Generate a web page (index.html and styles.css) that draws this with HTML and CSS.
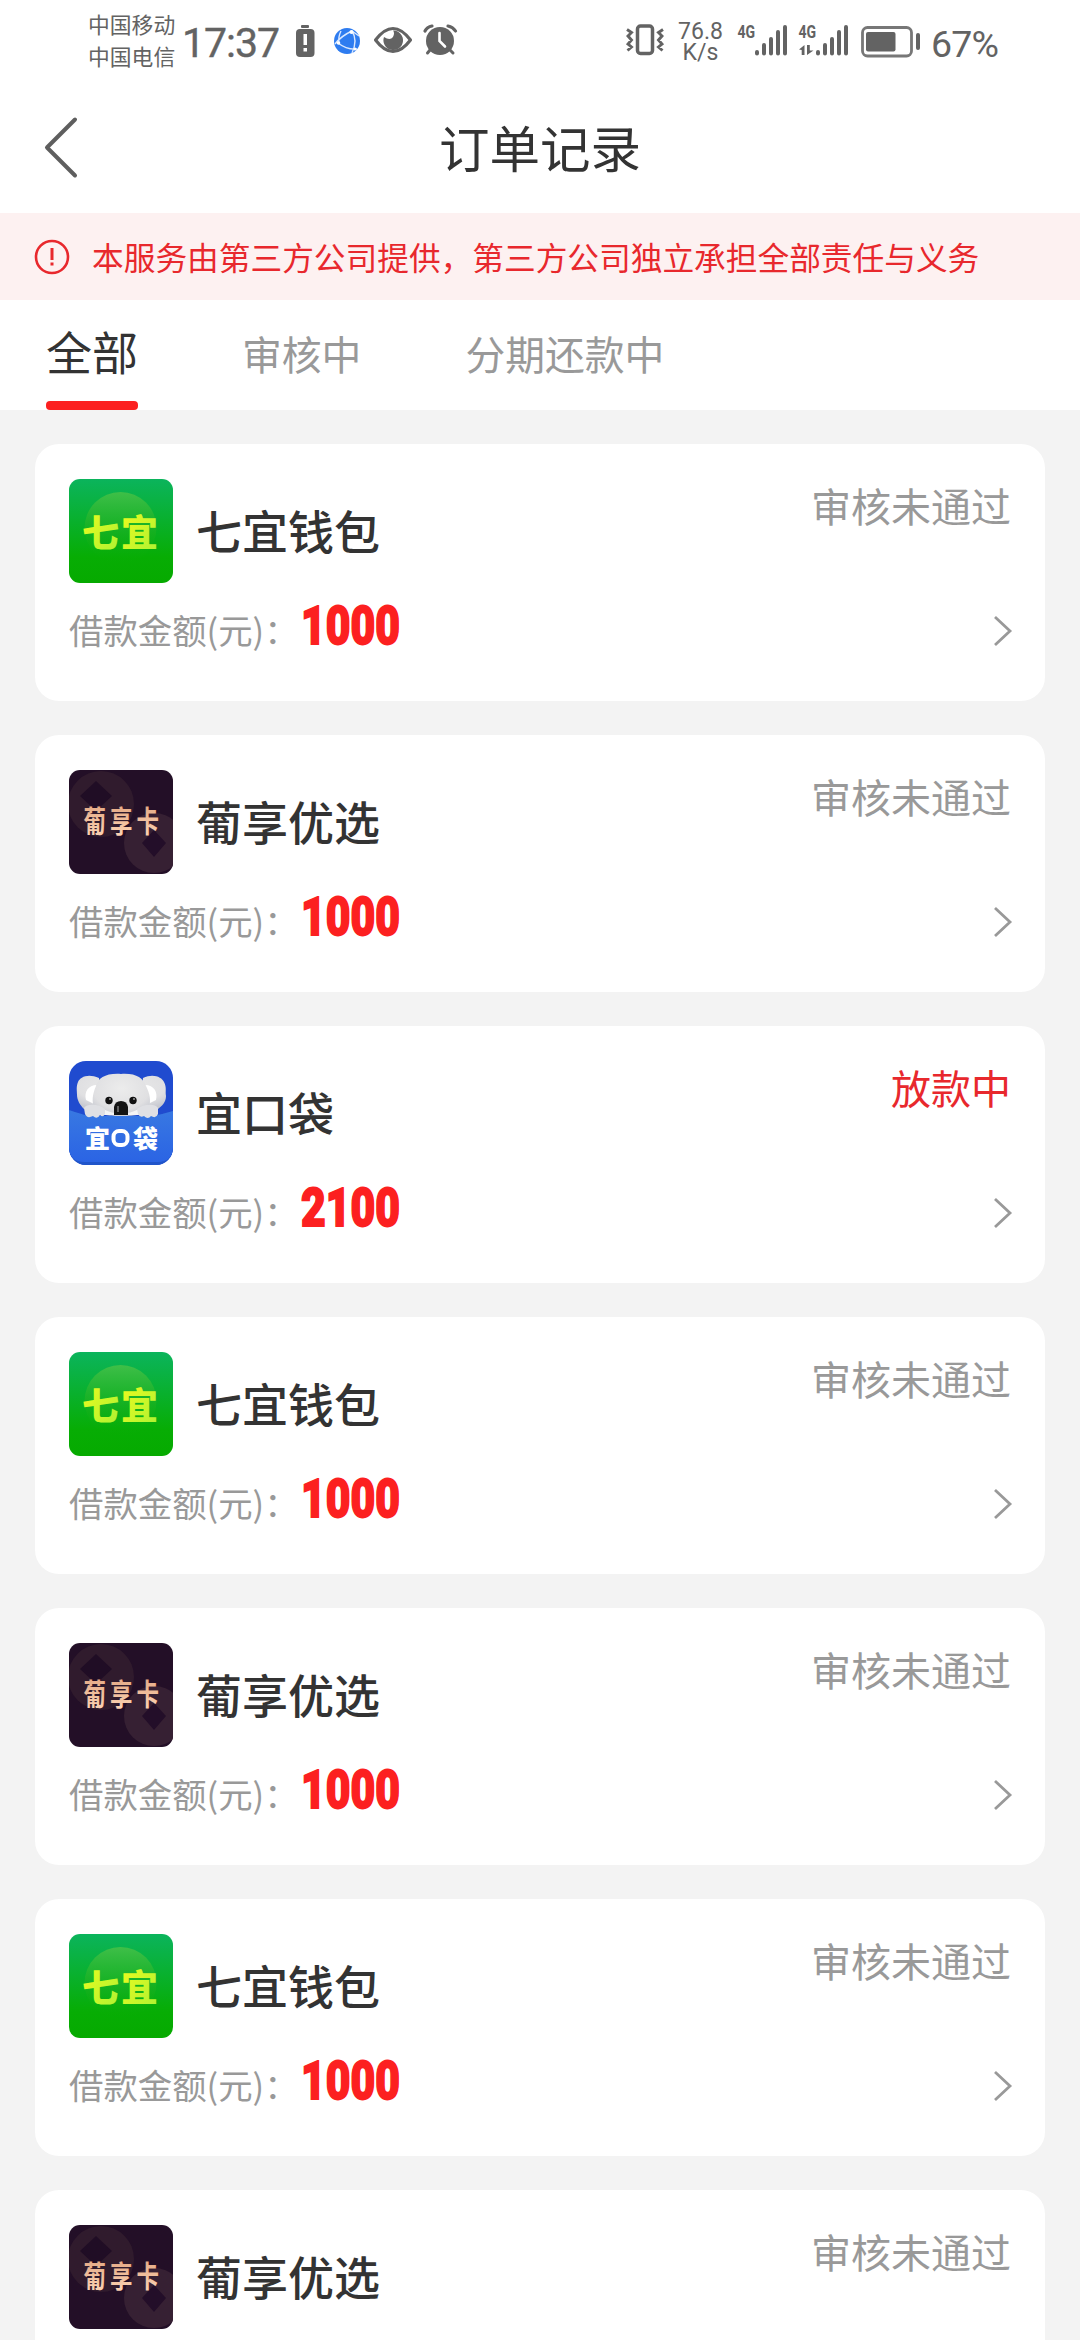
FILE: index.html
```html
<!DOCTYPE html>
<html lang="zh-CN">
<head>
<meta charset="utf-8">
<title>订单记录</title>
<link rel="stylesheet" href="styles.css">
</head>
<body>
<svg class="defs" width="0" height="0" aria-hidden="true">
  <defs>
    <linearGradient id="green" x1="0" y1="0" x2="0" y2="1"><stop offset="0" stop-color="#0bb45c"/><stop offset=".75" stop-color="#07ad04"/><stop offset="1" stop-color="#06aa00"/></linearGradient>
    <linearGradient id="glow" x1="0" y1="0" x2="0" y2="1"><stop offset="0" stop-color="#3fbf48"/><stop offset=".6" stop-color="#18b01c" stop-opacity=".6"/><stop offset="1" stop-color="#07ad04" stop-opacity="0"/></linearGradient>
    <linearGradient id="lime" x1="0" y1="0" x2="1" y2="1"><stop offset="0" stop-color="#f4fb1c"/><stop offset="1" stop-color="#a8f235"/></linearGradient>
    <linearGradient id="peach" x1="0" y1="0" x2="0" y2="1"><stop offset="0" stop-color="#dfa17c"/><stop offset="1" stop-color="#ffd9ba"/></linearGradient>
    <linearGradient id="pocket" x1="0" y1="0" x2="0" y2="1"><stop offset="0" stop-color="#3878e2"/><stop offset="1" stop-color="#2b64e4"/></linearGradient>
    <radialGradient id="fur" cx=".5" cy=".35" r=".7"><stop offset="0" stop-color="#ececec"/><stop offset=".7" stop-color="#e0e0e2"/><stop offset="1" stop-color="#c6c8d0"/></radialGradient>
    <clipPath id="roundKoala"><rect width="104" height="104" rx="17"/></clipPath>
    <clipPath id="roundDark"><rect width="104" height="104" rx="11"/></clipPath>
  </defs>
  <symbol id="logo-qiyi" viewBox="0 0 104 104">
    <rect width="104" height="104" rx="11" fill="url(#green)"/>
    <circle cx="51.5" cy="49" r="36" fill="url(#glow)"/>
  </symbol>
  <symbol id="logo-puxiang" viewBox="0 0 104 104">
    <g clip-path="url(#roundDark)">
      <rect width="104" height="104" fill="#230f27"/>
      <circle cx="32" cy="34" r="33" fill="#301b2d"/>
      <path d="M27 11 43 26 27 41 11 26z" fill="#200d25"/>
      <circle cx="85" cy="73" r="30" fill="#362033"/>
      <path d="M85 60 97 73 85 87 73 73z" fill="#230e29"/>
    </g>
  </symbol>
  <symbol id="logo-koudai" viewBox="0 0 104 104">
    <g clip-path="url(#roundKoala)">
      <rect width="104" height="104" fill="#204bcf"/>
      <path d="M0 49Q12 53 20 55H84Q94 53 104 50V104H0z" fill="#2055ca"/>
      <path d="M0 49Q12 53 20 55H84Q94 53 104 50V86Q104 101 88 101H16Q0 101 0 86z" fill="url(#pocket)"/>
      <path d="M30 17C19 12 11 16 9 21C7 26 8 29 8 34C8 39 11 44 15 48L33 45zM74 17C84 12 93 16 95 21C98 27 96 30 97 35C97 41 93 45 89 48L71 45z" fill="url(#fur)"/>
      <path d="M28 24C19 24 15 31 17 39L25 43zM76 24C85 24 89 31 87 39L79 43z" fill="#fff"/>
      <path d="M52 13C37 12 29 17 27 25C23 34 23 41 25 46C29 55 43 55 52 55C62 55 76 55 80 46C82 40 81 33 77 25C74 17 67 12 52 13z" fill="url(#fur)"/>
      <path d="M34 48Q52 57 70 48V54H34z" fill="#f5f5f5"/>
      <path d="M15 47C18 42 30 43 36 48V53Q34 57 31 54Q28 59 24 55Q18 58 16 53zM68 48C74 43 86 42 89 47V53Q87 58 82 55Q79 59 75 55Q71 57 69 53z" fill="#dfe0e4"/>
      <circle cx="40" cy="39.500" r="3.700" fill="#111"/><circle cx="64" cy="39.500" r="3.700" fill="#111"/>
      <circle cx="41" cy="38" r="1" fill="#999"/><circle cx="65" cy="38" r="1" fill="#999"/>
      <path d="M45 54V46Q46 40 52 40Q58 40 59 46V54z" fill="#141414"/>
      <path d="M49 51V45" stroke="#777" stroke-width="1.500"/>
    </g>
  </symbol>
  <symbol id="chevron" viewBox="0 0 20 32"><path d="M2 2 17 16 2 30" fill="none" stroke="#999" stroke-width="2.800"/></symbol>
</svg>

<header class="status-bar">
  <div class="carriers"><span>中国移动</span><span>中国电信</span></div>
  <div class="clock">17:37</div>
  <svg class="status-left-icons" width="170" height="40" viewBox="290 22 170 40">
    <g fill="#636363">
      <rect x="301" y="25" width="8" height="3" rx="1"/>
      <rect x="296" y="29" width="18.500" height="28" rx="4"/>
      <path d="M303.500 34h3.500v11h-3.500zM303.500 48h3.500v3.500h-3.500z" fill="#fff"/>
    </g>
    <circle cx="347" cy="41" r="13" fill="#2e7cf0"/>
    <path d="M335 44Q341 36 352 31M338 43Q347 50 357 49M352 31Q358 40 352 53M339 43Q338 37 341 31M352 31L359 36" fill="none" stroke="#d9e8ff" stroke-width="1.400"/>
    <circle cx="351.500" cy="32" r="2" fill="#fff"/><circle cx="338.500" cy="43" r="1.800" fill="#fff"/><circle cx="355" cy="49" r="1.600" fill="#fff"/>
    <path d="M375.500 40Q393 17 410.500 40Q393 63 375.500 40z" fill="none" stroke="#636363" stroke-width="3.200" stroke-linejoin="round"/>
    <path d="M393 30.500A9.800 9.800 0 1 1 384 37Q390 41 393 37Q395 33 393 30.500z" fill="#636363"/>
    <g fill="none" stroke="#636363" stroke-linecap="round">
      <circle cx="440" cy="41" r="14" fill="#636363" stroke="none"/>
      <path d="M425 31Q427 27 432 26M448 26Q453 27 455.500 31" stroke-width="3.200"/>
      <path d="M430 50 427.500 53M450 50 453 53" stroke-width="3"/>
      <path d="M439.500 33V41L445 46.500" stroke="#fff" stroke-width="2.600"/>
    </g>
  </svg>
  <svg class="vibrate" width="40" height="34" viewBox="625 23 40 34" fill="none" stroke="#636363">
    <rect x="637.500" y="26" width="15" height="27.500" rx="3" stroke-width="3.500"/>
    <path d="M627 29.500l4.500 3-3.500 3.500 3.500 4-3.500 4 3.500 3-4 3.500M663 29.500l-4.500 3 3.500 3.500-3.500 4 3.500 4-3.500 3 4 3.500" stroke-width="2.900"/>
  </svg>
  <div class="speed"><span>76.8</span><span>K/s</span></div>
  <svg class="signals" width="186" height="40" viewBox="736 22 186 40" fill="#636363">
    <text class="network" transform="translate(737.500 38) scale(.78 1)">4G</text>
    <text class="network" transform="translate(798.500 38) scale(.78 1)">4G</text>
    <g stroke="#636363" stroke-width="4" stroke-linecap="round">
      <path d="M757 52v1.500M764 45v8.500M771 39v14.500M778 32v21.500M785 27v26.500"/>
      <path d="M818 52v1.500M825 45v8.500M832 39v14.500M839 32v21.500M846 27v26.500"/>
    </g>
    <path d="M799 49.500 804.500 45V55H801.700V50zM807 45h2.800v5.500h3.700L807 55z"/>
    <rect x="862.500" y="27.500" width="49" height="28.500" rx="5" fill="none" stroke="#777" stroke-width="2.800"/>
    <rect x="866" y="32" width="29.500" height="19.500" rx="2"/>
    <rect x="916" y="33" width="4" height="17" rx="2"/>
  </svg>
  <div class="battery-level">67%</div>
</header>

<nav class="nav-bar">
  <svg class="back" width="34" height="64" viewBox="0 0 34 64"><path d="M31 3.500 3 31.500 31 59.500" fill="none" stroke="#5e5e5e" stroke-width="4" stroke-linecap="round" stroke-linejoin="round"/></svg>
  <h1 class="title">订单记录</h1>
</nav>

<div class="notice">
  <svg width="36" height="36" viewBox="0 0 36 36"><circle cx="18" cy="18" r="16" fill="none" stroke="#e8282d" stroke-width="2.600"/><path d="M18 9v12M18 23.500v3" stroke="#e8282d" stroke-width="3"/></svg>
  <span class="notice-text">本服务由第三方公司提供，第三方公司独立承担全部责任与义务</span>
</div>

<div class="tabs">
  <div class="tab active">全部</div>
  <div class="tab">审核中</div>
  <div class="tab">分期还款中</div>
</div>

<main class="orders">
  <article class="card">
    <div class="head">
      <svg class="logo" viewBox="0 0 104 104"><use href="#logo-qiyi"/><text class="logo-text lime" x="13" y="68">七</text><text class="logo-text lime" x="52" y="68">宜</text></svg>
      <h2 class="name">七宜钱包</h2><span class="state">审核未通过</span>
    </div>
    <div class="detail"><span class="label">借款金额(元)：</span><span class="amount">1000</span><svg class="arrow"><use href="#chevron"/></svg></div>
  </article>
  <article class="card">
    <div class="head">
      <svg class="logo" viewBox="0 0 104 104"><use href="#logo-puxiang"/><text class="logo-text peach" transform="translate(14.500 62) scale(.9 1.180)" letter-spacing="4.400">葡享卡</text></svg>
      <h2 class="name">葡享优选</h2><span class="state">审核未通过</span>
    </div>
    <div class="detail"><span class="label">借款金额(元)：</span><span class="amount">1000</span><svg class="arrow"><use href="#chevron"/></svg></div>
  </article>
  <article class="card">
    <div class="head">
      <svg class="logo" viewBox="0 0 104 104"><use href="#logo-koudai"/><text class="logo-text white" x="16" y="86.500">宜</text><rect x="44.500" y="70" width="14" height="14" rx="5.500" fill="none" stroke="#fff" stroke-width="4"/><text class="logo-text white" x="64" y="86.500">袋</text></svg>
      <h2 class="name">宜口袋</h2><span class="state paying">放款中</span>
    </div>
    <div class="detail"><span class="label">借款金额(元)：</span><span class="amount">2100</span><svg class="arrow"><use href="#chevron"/></svg></div>
  </article>
  <article class="card">
    <div class="head">
      <svg class="logo" viewBox="0 0 104 104"><use href="#logo-qiyi"/><text class="logo-text lime" x="13" y="68">七</text><text class="logo-text lime" x="52" y="68">宜</text></svg>
      <h2 class="name">七宜钱包</h2><span class="state">审核未通过</span>
    </div>
    <div class="detail"><span class="label">借款金额(元)：</span><span class="amount">1000</span><svg class="arrow"><use href="#chevron"/></svg></div>
  </article>
  <article class="card">
    <div class="head">
      <svg class="logo" viewBox="0 0 104 104"><use href="#logo-puxiang"/><text class="logo-text peach" transform="translate(14.500 62) scale(.9 1.180)" letter-spacing="4.400">葡享卡</text></svg>
      <h2 class="name">葡享优选</h2><span class="state">审核未通过</span>
    </div>
    <div class="detail"><span class="label">借款金额(元)：</span><span class="amount">1000</span><svg class="arrow"><use href="#chevron"/></svg></div>
  </article>
  <article class="card">
    <div class="head">
      <svg class="logo" viewBox="0 0 104 104"><use href="#logo-qiyi"/><text class="logo-text lime" x="13" y="68">七</text><text class="logo-text lime" x="52" y="68">宜</text></svg>
      <h2 class="name">七宜钱包</h2><span class="state">审核未通过</span>
    </div>
    <div class="detail"><span class="label">借款金额(元)：</span><span class="amount">1000</span><svg class="arrow"><use href="#chevron"/></svg></div>
  </article>
  <article class="card">
    <div class="head">
      <svg class="logo" viewBox="0 0 104 104"><use href="#logo-puxiang"/><text class="logo-text peach" transform="translate(14.500 62) scale(.9 1.180)" letter-spacing="4.400">葡享卡</text></svg>
      <h2 class="name">葡享优选</h2><span class="state">审核未通过</span>
    </div>
  </article>
</main>
</body>
</html>
```

FILE: styles.css
```css
* { box-sizing: border-box; margin: 0; padding: 0; }
html, body { height: 2340px; overflow: hidden; }
body {
  width: 1080px;
  display: flex;
  flex-direction: column;
  background: #fff;
  color: #333;
  font-family: "Noto Sans CJK SC", sans-serif;
}
svg { display: block; flex: none; }
.defs { position: absolute; }

.status-bar {
  height: 90px;
  flex: none;
  display: flex;
  align-items: flex-start;
  padding-left: 88px;
  color: #636363;
  white-space: nowrap;
}
.carriers {
  width: 94px;
  padding-top: 8px;
  display: flex;
  flex-direction: column;
  font-size: 21.800px;
  line-height: 32px;
}
.clock {
  width: 108px;
  padding-top: 19px;
  font: 400 41px/48px Roboto, sans-serif;
  letter-spacing: -1px;
  -webkit-text-stroke: .4px #636363;
}
.status-left-icons { margin-top: 22px; }
.vibrate { margin: 23px 0 0 165px; }
.speed {
  width: 71px;
  padding-top: 21px;
  display: flex;
  flex-direction: column;
  align-items: center;
  font: 400 23px/21px Roboto, sans-serif;
}
.signals { margin-top: 22px; }
.network { font: 700 18px Roboto, sans-serif; }
.battery-level {
  margin-left: 9px;
  padding-top: 20px;
  font: 400 37.500px/48px Roboto, sans-serif;
  letter-spacing: -.800px;
}

.nav-bar {
  height: 123px;
  flex: none;
  display: grid;
  grid-template-columns: 80px 1fr 80px;
  align-items: center;
}
.back { margin: -8px 0 0 44px; }
.title {
  padding-bottom: 11px;
  text-align: center;
  font-size: 50.500px;
  font-weight: 400;
  line-height: 60px;
}

.notice {
  height: 87px;
  flex: none;
  display: flex;
  align-items: center;
  gap: 22px;
  padding-left: 34px;
  background: #fdf1f1;
  color: #e8282d;
  font-size: 31.700px;
  line-height: 44px;
  white-space: nowrap;
}
.notice-text { padding-bottom: 2px; }

.tabs {
  height: 110px;
  flex: none;
  display: flex;
  padding-left: 46px;
  gap: 104px;
  color: #999;
  font-size: 39.800px;
  line-height: 106px;
}
.active {
  color: #333;
  font-size: 46px;
  display: flex;
  flex-direction: column;
  line-height: 101px;
}
.active::after {
  content: "";
  height: 9px;
  border-radius: 4px;
  background: #fc2020;
}

.orders {
  flex: 1;
  min-height: 0;
  display: flex;
  flex-direction: column;
  gap: 34px;
  padding: 33.700px 35px 0;
  background: #f3f3f3;
  overflow: hidden;
}
.card {
  height: 257px;
  flex: none;
  padding: 35px 34px 0;
  border-radius: 24px;
  background: #fff;
}
.head { height: 104px; display: flex; align-items: center; }
.logo { width: 104px; height: 104px; }
.logo-text { font-family: "Noto Sans CJK SC", sans-serif; font-weight: 900; }
.lime { font-size: 37px; fill: url(#lime); }
.peach { font-size: 25px; font-weight: 700; fill: url(#peach); }
.white { font-size: 25px; fill: #fff; }
.name {
  margin-left: 23px;
  padding-bottom: 3px;
  font-size: 46px;
  font-weight: 500;
  line-height: 64px;
}
.state {
  margin-left: auto;
  align-self: flex-start;
  color: #999;
  font-size: 40px;
  line-height: 53px;
}
.paying { color: #e8282d; }
.detail { height: 96px; display: flex; align-items: center; }
.label {
  width: 232px;
  padding-bottom: 3px;
  color: #999;
  font-size: 34.400px;
  font-weight: 400;
  line-height: 48px;
  white-space: nowrap;
}
.amount {
  margin-bottom: 10px;
  color: #fc2020;
  font: 900 54px/60px Roboto, sans-serif;
  -webkit-text-stroke: 1.800px #fc2020;
  transform: scaleX(.79);
  transform-origin: left center;
}
.arrow { width: 20px; height: 32px; margin: 0 -2px 0 auto; }
```
